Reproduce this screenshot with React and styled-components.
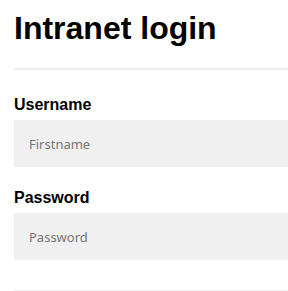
import styled, { createGlobalStyle } from "styled-components";

const GlobalStyle = createGlobalStyle`
  html, body {
    margin: 0;
    padding: 0;
    background: #ffffff;
  }
  body {
    font-family: "Liberation Sans", Arial, sans-serif;
    color: #000000;
  }
`;

const Page = styled.div`
  padding: 10px 0 0 14px;
  display: flex;
  flex-direction: column;
`;

const Title = styled.h1`
  margin: 0;
  font-size: 32px;
  font-weight: bold;
  line-height: 37px;
`;

const Rule = styled.hr`
  margin: ${(p) => p.$margin || "0"};
  border: none;
  height: 2px;
  background: #eeeeee;
  width: 100%;
`;

const Form = styled.form`
  display: flex;
  flex-direction: column;
  gap: 22px;
`;

const Field = styled.div`
  display: flex;
  flex-direction: column;
  gap: 6px;
`;

const Label = styled.label`
  font-size: 16px;
  font-weight: bold;
  line-height: 18px;
`;

const Input = styled.input`
  box-sizing: border-box;
  width: 100%;
  height: 47px;
  border: none;
  outline: none;
  background: #f0f0f0;
  padding: 0 15px;
  font-family: "Noto Sans", sans-serif;
  font-size: 13px;
  color: #333;

  &::placeholder {
    color: #777777;
  }
`;

const fields = [
  { id: "username", label: "Username", type: "text", placeholder: "Firstname" },
  { id: "password", label: "Password", type: "password", placeholder: "Password" },
];

const App = () => {
  return (
    <>
      <GlobalStyle />
      <Page>
        <Title>Intranet login</Title>
        <Rule $margin="21px 0 26px" />
        <Form onSubmit={(e) => e.preventDefault()}>
          {fields.map((f) => (
            <Field key={f.id}>
              <Label htmlFor={f.id}>{f.label}</Label>
              <Input id={f.id} type={f.type} placeholder={f.placeholder} />
            </Field>
          ))}
        </Form>
        <Rule $margin="30px 0 0" />
      </Page>
    </>
  );
};

export default App;
